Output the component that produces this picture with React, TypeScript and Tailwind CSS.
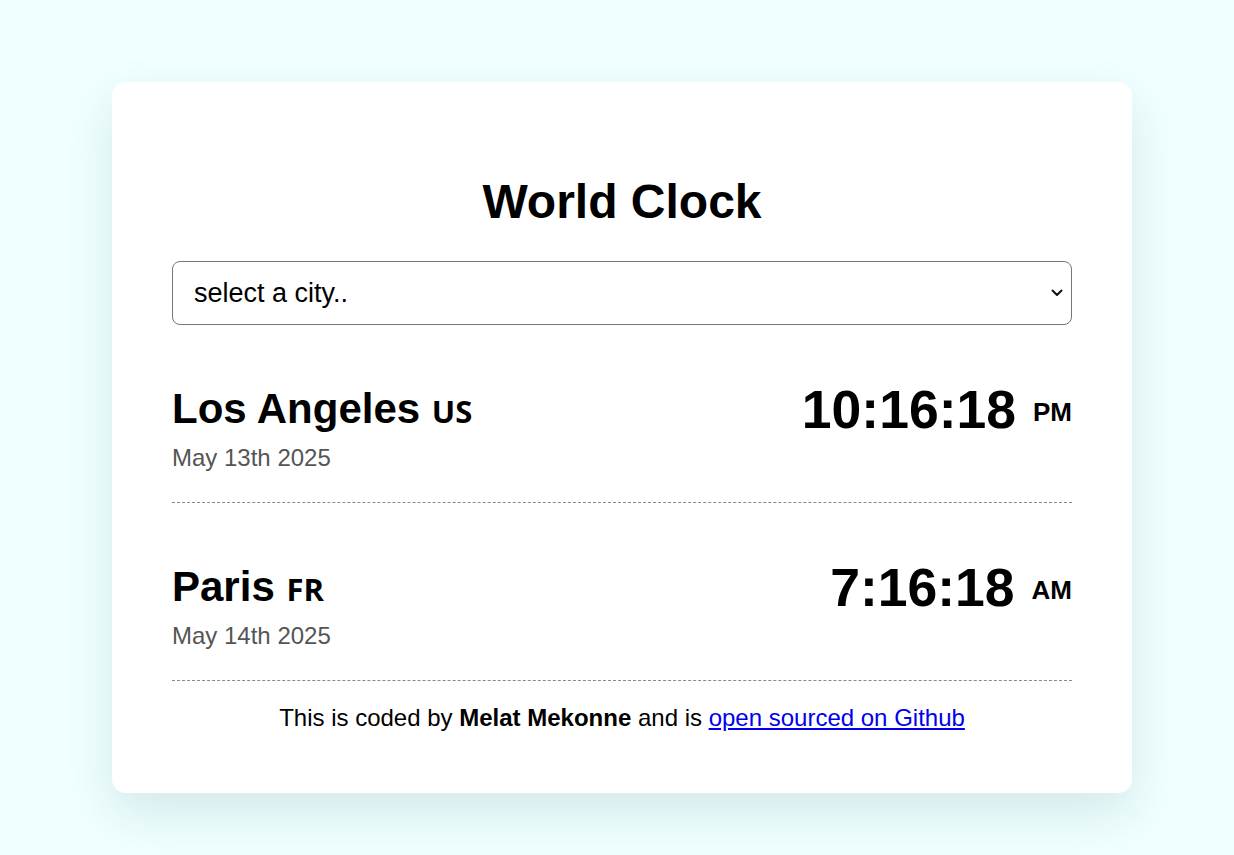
const cities = [
  { name: 'Los Angeles', code: 'US', date: 'May 13th 2025', time: '10:16:18', period: 'PM' },
  { name: 'Paris', code: 'FR', date: 'May 14th 2025', time: '7:16:18', period: 'AM' },
];

const App = () => {
  return (
    <div className="min-h-screen bg-[#f0ffff] pt-[82px] pb-[63px] font-['Liberation_Sans',Arial,sans-serif] text-black">
      <div className="ml-[112px] w-[1020px] rounded-[14px] bg-white px-[60px] pt-[92px] pb-[61px] shadow-[0_20px_50px_rgba(0,70,80,0.12)]">
        <h1 className="text-center text-[48px] leading-[1.15] font-bold">World Clock</h1>

        <div className="relative mt-[32px]">
          <select className="h-[64px] w-full appearance-none rounded-[8px] border border-[#767676] bg-white pl-[21px] pr-[40px] text-[27px] outline-none">
            <option>select a city..</option>
          </select>
          <svg
            className="pointer-events-none absolute top-1/2 right-[9px] -translate-y-1/2"
            width="12"
            height="8"
            viewBox="0 0 12 8"
            fill="none"
          >
            <path d="M1.5 1.5 6 6l4.5-4.5" stroke="#111" strokeWidth="2" strokeLinecap="round" strokeLinejoin="round" />
          </svg>
        </div>

        {cities.map((city) => (
          <div
            key={city.name}
            className="flex items-start justify-between border-b border-dashed border-[#8a8a8a] pt-[52px] pb-[30px]"
          >
            <div className="mt-[8px]">
              <div className="text-[42px] leading-[1.15] font-bold">
                {city.name}{' '}
                <span className="font-['Open_Sans',sans-serif] text-[31px] font-bold">{city.code}</span>
              </div>
              <div className="mt-[11px] text-[24px] leading-[1.15] text-[#555]">{city.date}</div>
            </div>
            <div className="mt-[2px] flex items-center">
              <span className="text-[53.5px] leading-[1.15] font-bold">{city.time}</span>
              <span className="mt-[6px] ml-[17px] text-[26px] leading-[1.15] font-bold">{city.period}</span>
            </div>
          </div>
        ))}

        <p className="mt-[23px] text-center text-[24px] leading-[1.15]">
          This is coded by <strong className="font-bold">Melat Mekonne</strong> and is{' '}
          <a href="#" className="text-[#0000ee] underline">
            open sourced on Github
          </a>
        </p>
      </div>
    </div>
  );
};

export default App;
